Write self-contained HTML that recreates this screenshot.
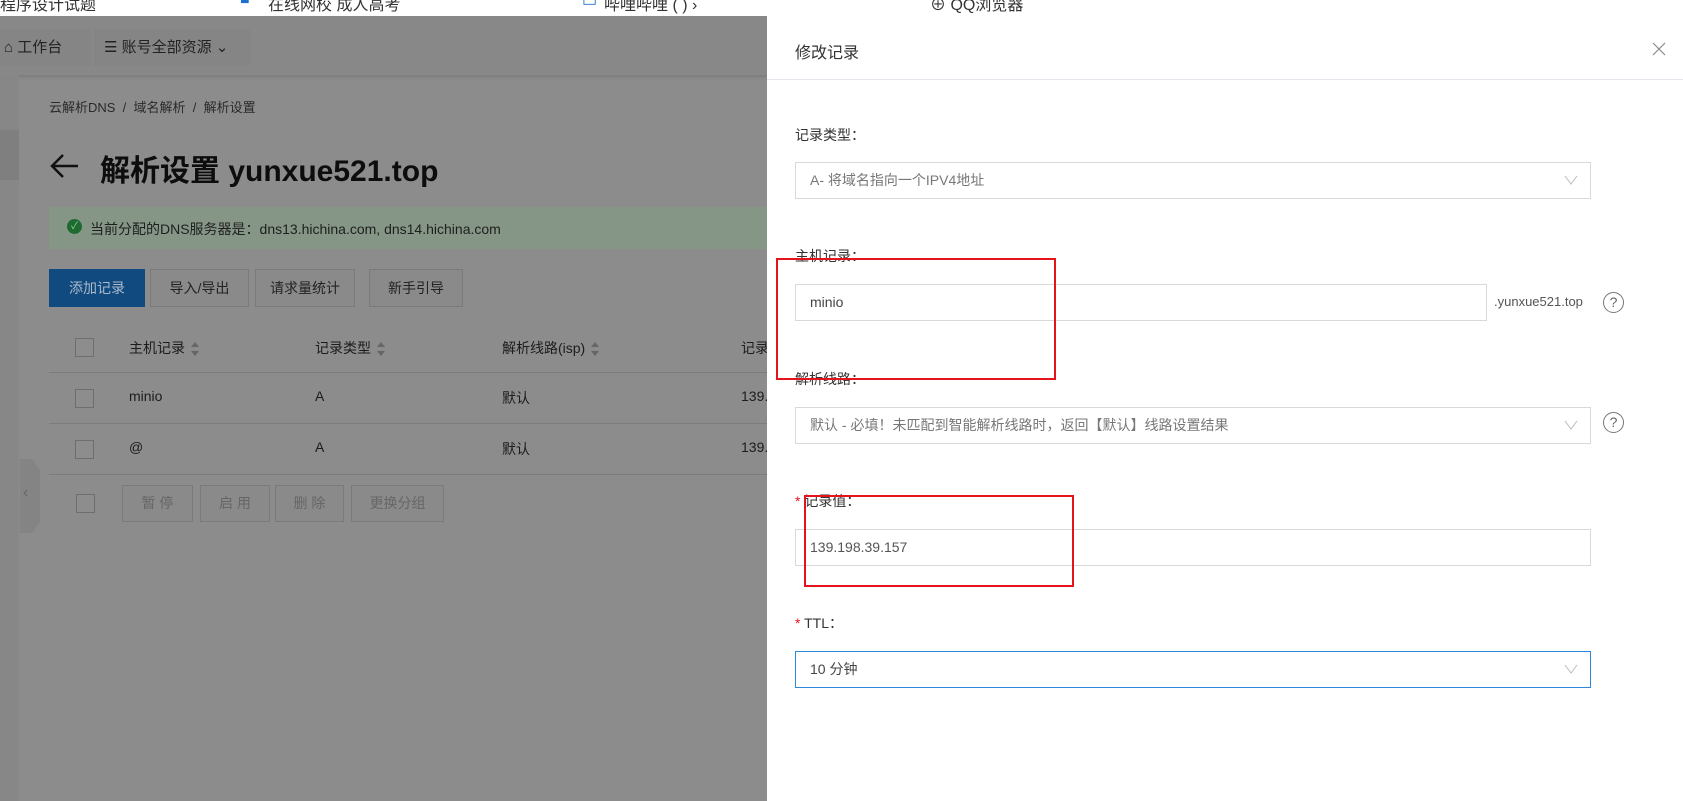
<!DOCTYPE html>
<html><head><meta charset="utf-8">
<style>
*{margin:0;padding:0;box-sizing:border-box}
body{width:1683px;height:801px;overflow:hidden;position:relative;background:#8c8c8c;font-family:"Liberation Sans","Noto Sans CJK SC",sans-serif;color:#1c1c1c}
.a{position:absolute}
.bm{left:0;top:0;width:1683px;height:16px;background:#fff;overflow:hidden}
.bm span{position:absolute;top:-9px;font-size:16px;color:#333;white-space:nowrap}
.nav{left:0;top:16px;width:767px;height:59px;background:#888;box-shadow:0 2px 3px rgba(0,0,0,.12)}
.nbtn{top:13px;height:37px;background:#858585;font-size:15px;line-height:37px;color:#222}
.side{left:0;top:75px;width:19px;height:726px;background:#878787}
.txt{white-space:nowrap}
.btn{border:1px solid #7a7a7a;background:#8a8a8a;font-size:14px;text-align:center;color:#222}
.cb{width:19px;height:19px;border:1px solid #6e6e6e;background:#8d8d8d}
.hl{height:1px;background:#7c7c7c;left:49px;width:718px}
.panel{left:767px;top:16px;width:916px;height:785px;background:#fff}
.lbl{font-size:14px;color:#333}
.box{border:1px solid #d9d9d9;background:#fff;height:37px;font-size:14px;color:#777;line-height:35px;padding-left:14px}
.chev{position:absolute;right:12px;top:12px;width:14px;height:10px}
.q{width:21px;height:21px;border:1.5px solid #777;border-radius:50%;font-size:14px;color:#666;text-align:center;line-height:18px}
.red{border:2px solid #e5131b}
.star{color:#e5131b}
.sort{display:inline-block;vertical-align:middle;margin-left:6px;width:8px;height:14px;position:relative}
.sort:before{content:"";position:absolute;left:0;top:0;border:4px solid transparent;border-bottom:5px solid #666;border-top:0}
.sort:after{content:"";position:absolute;left:0;bottom:0;border:4px solid transparent;border-top:5px solid #666;border-bottom:0}
</style></head><body>
<div class="a bm"><span style="left:0">程序设计试题</span><span style="left:240px;color:#1e6fd0">■</span><span style="left:268px">在线网校 成人高考</span><span style="left:582px;color:#1e6fd0">▭</span><span style="left:604px">哔哩哔哩 (  ) ›</span><span style="left:930px">⊕ QQ浏览器</span></div>
<div class="a nav"></div>
<div class="a nbtn" style="left:0;width:91px;top:29px"><span style="padding-left:4px">⌂ 工作台</span></div>
<div class="a nbtn" style="left:94px;width:156px;top:29px;padding-left:10px">☰ 账号全部资源 ⌄</div>
<div class="a side"></div>
<div class="a" style="left:0;top:130px;width:19px;height:50px;background:#7f7f7f"></div>
<div class="a txt" style="left:49px;top:97px;font-size:13px;color:#2a2a2a">云解析DNS &nbsp;/&nbsp; 域名解析 &nbsp;/&nbsp; 解析设置</div>
<svg class="a" style="left:50px;top:153px" width="30" height="28"><path d="M28 13H3M13 2L2 13l11 11" stroke="#111" stroke-width="2.5" fill="none"/></svg>
<div class="a txt" style="left:100px;top:146px;font-size:30px;font-weight:bold;color:#0d0d0d">解析设置 yunxue521.top</div>
<div class="a" style="left:49px;top:207px;width:718px;height:42px;background:#859686"></div>
<div class="a" style="left:67px;top:219px;width:15px;height:15px;border-radius:50%;background:#1e6b32;color:#9c9;font-size:10px;text-align:center;line-height:15px">✓</div>
<div class="a txt" style="left:90px;top:219px;font-size:14px;color:#1e1e1e">当前分配的DNS服务器是：dns13.hichina.com, dns14.hichina.com</div>
<div class="a btn" style="left:49px;top:269px;width:96px;height:38px;line-height:36px;background:#114a7f;border-color:#114a7f;color:#aab9cc">添加记录</div>
<div class="a btn" style="left:150px;top:269px;width:99px;height:38px;line-height:36px">导入/导出</div>
<div class="a btn" style="left:255px;top:269px;width:100px;height:38px;line-height:36px">请求量统计</div>
<div class="a btn" style="left:369px;top:269px;width:94px;height:38px;line-height:36px">新手引导</div>
<div class="a hl" style="top:372px"></div><div class="a hl" style="top:423px"></div><div class="a hl" style="top:474px"></div>
<div class="a cb" style="left:75px;top:338px"></div><div class="a cb" style="left:75px;top:389px"></div><div class="a cb" style="left:75px;top:440px"></div><div class="a cb" style="left:76px;top:494px"></div>
<div class="a txt" style="left:129px;top:338px;font-size:14px">主机记录<i class="sort"></i></div>
<div class="a txt" style="left:315px;top:338px;font-size:14px">记录类型<i class="sort"></i></div>
<div class="a txt" style="left:502px;top:338px;font-size:14px">解析线路(isp)<i class="sort"></i></div>
<div class="a txt" style="left:741px;top:338px;font-size:14px">记录</div>
<div class="a txt" style="left:129px;top:388px;font-size:14px">minio</div><div class="a txt" style="left:315px;top:388px;font-size:14px">A</div><div class="a txt" style="left:502px;top:388px;font-size:14px">默认</div><div class="a txt" style="left:741px;top:388px;font-size:14px">139.</div>
<div class="a txt" style="left:129px;top:439px;font-size:14px">@</div><div class="a txt" style="left:315px;top:439px;font-size:14px">A</div><div class="a txt" style="left:502px;top:439px;font-size:14px">默认</div><div class="a txt" style="left:741px;top:439px;font-size:14px">139.</div>
<div class="a btn" style="left:122px;top:485px;width:71px;height:37px;line-height:35px;color:#666">暂 停</div>
<div class="a btn" style="left:200px;top:485px;width:70px;height:37px;line-height:35px;color:#666">启 用</div>
<div class="a btn" style="left:275px;top:485px;width:69px;height:37px;line-height:35px;color:#666">删 除</div>
<div class="a btn" style="left:351px;top:485px;width:93px;height:37px;line-height:35px;color:#666">更换分组</div>
<div class="a" style="left:20px;top:459px;width:20px;height:74px;background:#848484;clip-path:polygon(0 0,60% 0,100% 15%,100% 85%,60% 100%,0 100%)"></div>
<div class="a txt" style="left:23px;top:484px;color:#666;font-size:16px">‹</div>

<div class="a panel">
  <div class="a txt" style="left:28px;top:23px;font-size:16px;color:#333">修改记录</div>
  <svg class="a" style="left:885px;top:26px" width="14" height="14"><path d="M1 1L13 13M13 1L1 13" stroke="#888" stroke-width="1.2"/></svg>
  <div class="a" style="left:0;top:63px;width:916px;height:1px;background:#e4e8ee"></div>
  <div class="a lbl txt" style="left:28px;top:109px">记录类型：</div>
  <div class="a box" style="left:28px;top:146px;width:796px">A- 将域名指向一个IPV4地址<svg class="chev" viewBox="0 0 14 10"><path d="M1 1L7 9L13 1" stroke="#bbb" fill="none"/></svg></div>
  <div class="a lbl txt" style="left:28px;top:230px">主机记录：</div>
  <div class="a box" style="left:28px;top:268px;width:692px;color:#444">minio</div>
  <div class="a txt" style="left:727px;top:278px;font-size:13px;color:#555">.yunxue521.top</div>
  <div class="a q" style="left:836px;top:276px">?</div>
  <div class="a lbl txt" style="left:28px;top:353px">解析线路：</div>
  <div class="a box" style="left:28px;top:391px;width:796px">默认 - 必填！未匹配到智能解析线路时，返回【默认】线路设置结果<svg class="chev" viewBox="0 0 14 10"><path d="M1 1L7 9L13 1" stroke="#bbb" fill="none"/></svg></div>
  <div class="a q" style="left:836px;top:396px">?</div>
  <div class="a lbl txt" style="left:28px;top:475px"><span class="star">*</span> 记录值：</div>
  <div class="a box" style="left:28px;top:513px;width:796px;color:#555">139.198.39.157</div>
  <div class="a lbl txt" style="left:28px;top:597px"><span class="star">*</span> TTL：</div>
  <div class="a box" style="left:28px;top:635px;width:796px;border-color:#2e8ad8;color:#444">10 分钟<svg class="chev" viewBox="0 0 14 10"><path d="M1 1L7 9L13 1" stroke="#bbb" fill="none"/></svg></div>
</div>
<div class="a red" style="left:776px;top:258px;width:280px;height:122px"></div>
<div class="a red" style="left:804px;top:495px;width:270px;height:92px"></div>
</body></html>
